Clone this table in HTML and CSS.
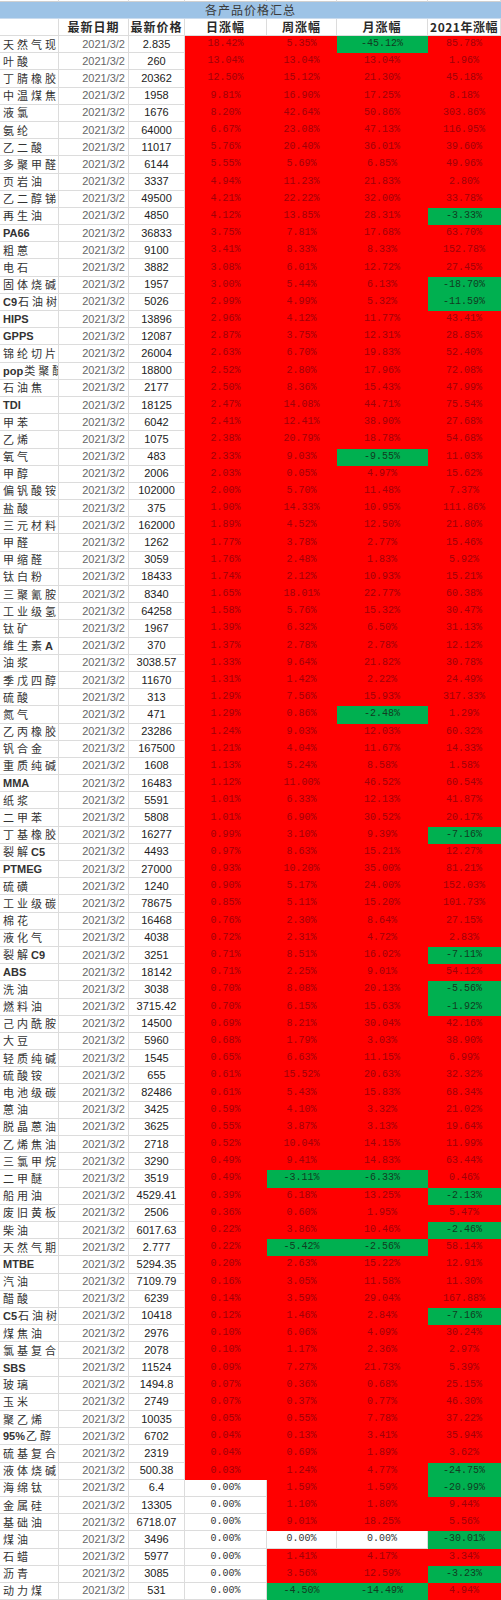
FILE: index.html
```html
<!DOCTYPE html>
<html lang="zh-CN">
<head>
<meta charset="utf-8">
<title>各产品价格汇总</title>
<link rel="stylesheet" href="styles.css">
</head>
<body>
<table class="sheet">
<colgroup><col class="c1"><col class="c2"><col class="c3"><col class="c4"><col class="c5"><col class="c6"><col class="c7"></colgroup>
<tbody>
<tr class="stub"><td></td><td></td><td></td><td></td><td></td><td></td><td></td></tr>
<tr class="title"><td colspan="7">各产品价格汇总</td></tr>
<tr class="head"><td></td><td>最新日期</td><td>最新价格</td><td>日涨幅</td><td>周涨幅</td><td>月涨幅</td><td>2021年涨幅</td></tr>
<tr><td class="n">天然气现货</td><td class="d">2021/3/2</td><td class="p">2.835</td><td class="r">18.42%</td><td class="r">5.35%</td><td class="g">-45.12%</td><td class="r">85.78%</td></tr>
<tr><td class="n">叶酸</td><td class="d">2021/3/2</td><td class="p">260</td><td class="r">13.04%</td><td class="r">13.04%</td><td class="r">13.04%</td><td class="r">1.96%</td></tr>
<tr><td class="n">丁腈橡胶</td><td class="d">2021/3/2</td><td class="p">20362</td><td class="r">12.50%</td><td class="r">15.12%</td><td class="r">21.30%</td><td class="r">45.18%</td></tr>
<tr><td class="n">中温煤焦油</td><td class="d">2021/3/2</td><td class="p">1958</td><td class="r">9.81%</td><td class="r">16.90%</td><td class="r">17.25%</td><td class="r">8.18%</td></tr>
<tr><td class="n">液氯</td><td class="d">2021/3/2</td><td class="p">1676</td><td class="r">8.20%</td><td class="r">42.64%</td><td class="r">50.86%</td><td class="r">303.86%</td></tr>
<tr><td class="n">氨纶</td><td class="d">2021/3/2</td><td class="p">64000</td><td class="r">6.67%</td><td class="r">23.08%</td><td class="r">47.13%</td><td class="r">116.95%</td></tr>
<tr><td class="n">乙二酸</td><td class="d">2021/3/2</td><td class="p">11017</td><td class="r">5.76%</td><td class="r">20.40%</td><td class="r">36.01%</td><td class="r">39.60%</td></tr>
<tr><td class="n">多聚甲醛</td><td class="d">2021/3/2</td><td class="p">6144</td><td class="r">5.55%</td><td class="r">5.69%</td><td class="r">6.85%</td><td class="r">49.96%</td></tr>
<tr><td class="n">页岩油</td><td class="d">2021/3/2</td><td class="p">3337</td><td class="r">4.94%</td><td class="r">11.23%</td><td class="r">21.83%</td><td class="r">2.80%</td></tr>
<tr><td class="n">乙二醇锑</td><td class="d">2021/3/2</td><td class="p">49500</td><td class="r">4.21%</td><td class="r">22.22%</td><td class="r">32.00%</td><td class="r">33.78%</td></tr>
<tr><td class="n">再生油</td><td class="d">2021/3/2</td><td class="p">4850</td><td class="r">4.12%</td><td class="r">13.85%</td><td class="r">28.31%</td><td class="g">-3.33%</td></tr>
<tr><td class="n"><span class="l">PA66</span></td><td class="d">2021/3/2</td><td class="p">36833</td><td class="r">3.75%</td><td class="r">7.81%</td><td class="r">17.68%</td><td class="r">63.70%</td></tr>
<tr><td class="n">粗蒽</td><td class="d">2021/3/2</td><td class="p">9100</td><td class="r">3.41%</td><td class="r">8.33%</td><td class="r">8.33%</td><td class="r">152.78%</td></tr>
<tr><td class="n">电石</td><td class="d">2021/3/2</td><td class="p">3882</td><td class="r">3.08%</td><td class="r">6.01%</td><td class="r">12.72%</td><td class="r">27.45%</td></tr>
<tr><td class="n">固体烧碱</td><td class="d">2021/3/2</td><td class="p">1957</td><td class="r">3.00%</td><td class="r">5.44%</td><td class="r">6.13%</td><td class="g">-18.70%</td></tr>
<tr><td class="n"><span class="l">C9</span>石油树脂</td><td class="d">2021/3/2</td><td class="p">5026</td><td class="r">2.99%</td><td class="r">4.99%</td><td class="r">5.32%</td><td class="g">-11.59%</td></tr>
<tr><td class="n"><span class="l">HIPS</span></td><td class="d">2021/3/2</td><td class="p">13896</td><td class="r">2.96%</td><td class="r">4.12%</td><td class="r">11.77%</td><td class="r">43.41%</td></tr>
<tr><td class="n"><span class="l">GPPS</span></td><td class="d">2021/3/2</td><td class="p">12087</td><td class="r">2.87%</td><td class="r">3.75%</td><td class="r">12.31%</td><td class="r">28.85%</td></tr>
<tr><td class="n">锦纶切片</td><td class="d">2021/3/2</td><td class="p">26004</td><td class="r">2.63%</td><td class="r">6.70%</td><td class="r">19.83%</td><td class="r">52.40%</td></tr>
<tr><td class="n"><span class="l">pop</span>类聚醚</td><td class="d">2021/3/2</td><td class="p">18800</td><td class="r">2.52%</td><td class="r">2.80%</td><td class="r">17.96%</td><td class="r">72.08%</td></tr>
<tr><td class="n">石油焦</td><td class="d">2021/3/2</td><td class="p">2177</td><td class="r">2.50%</td><td class="r">8.36%</td><td class="r">15.43%</td><td class="r">47.99%</td></tr>
<tr><td class="n"><span class="l">TDI</span></td><td class="d">2021/3/2</td><td class="p">18125</td><td class="r">2.47%</td><td class="r">14.08%</td><td class="r">44.71%</td><td class="r">75.54%</td></tr>
<tr><td class="n">甲苯</td><td class="d">2021/3/2</td><td class="p">6042</td><td class="r">2.41%</td><td class="r">12.41%</td><td class="r">38.90%</td><td class="r">27.68%</td></tr>
<tr><td class="n">乙烯</td><td class="d">2021/3/2</td><td class="p">1075</td><td class="r">2.38%</td><td class="r">20.79%</td><td class="r">18.78%</td><td class="r">54.68%</td></tr>
<tr><td class="n">氧气</td><td class="d">2021/3/2</td><td class="p">483</td><td class="r">2.33%</td><td class="r">9.03%</td><td class="g">-9.55%</td><td class="r">11.03%</td></tr>
<tr><td class="n">甲醇</td><td class="d">2021/3/2</td><td class="p">2006</td><td class="r">2.03%</td><td class="r">0.05%</td><td class="r">4.97%</td><td class="r">15.62%</td></tr>
<tr><td class="n">偏钒酸铵</td><td class="d">2021/3/2</td><td class="p">102000</td><td class="r">2.00%</td><td class="r">5.70%</td><td class="r">11.48%</td><td class="r">7.37%</td></tr>
<tr><td class="n">盐酸</td><td class="d">2021/3/2</td><td class="p">375</td><td class="r">1.90%</td><td class="r">14.33%</td><td class="r">10.95%</td><td class="r">111.86%</td></tr>
<tr><td class="n">三元材料</td><td class="d">2021/3/2</td><td class="p">162000</td><td class="r">1.89%</td><td class="r">4.52%</td><td class="r">12.50%</td><td class="r">21.80%</td></tr>
<tr><td class="n">甲醛</td><td class="d">2021/3/2</td><td class="p">1262</td><td class="r">1.77%</td><td class="r">3.78%</td><td class="r">2.77%</td><td class="r">15.46%</td></tr>
<tr><td class="n">甲缩醛</td><td class="d">2021/3/2</td><td class="p">3059</td><td class="r">1.76%</td><td class="r">2.48%</td><td class="r">1.83%</td><td class="r">5.92%</td></tr>
<tr><td class="n">钛白粉</td><td class="d">2021/3/2</td><td class="p">18433</td><td class="r">1.74%</td><td class="r">2.12%</td><td class="r">10.93%</td><td class="r">15.21%</td></tr>
<tr><td class="n">三聚氰胺</td><td class="d">2021/3/2</td><td class="p">8340</td><td class="r">1.65%</td><td class="r">18.01%</td><td class="r">22.77%</td><td class="r">60.38%</td></tr>
<tr><td class="n">工业级氢氧化锂</td><td class="d">2021/3/2</td><td class="p">64258</td><td class="r">1.58%</td><td class="r">5.76%</td><td class="r">15.32%</td><td class="r">30.47%</td></tr>
<tr><td class="n">钛矿</td><td class="d">2021/3/2</td><td class="p">1967</td><td class="r">1.39%</td><td class="r">6.32%</td><td class="r">6.50%</td><td class="r">31.13%</td></tr>
<tr><td class="n">维生素<span class="l">A</span></td><td class="d">2021/3/2</td><td class="p">370</td><td class="r">1.37%</td><td class="r">2.78%</td><td class="r">2.78%</td><td class="r">12.12%</td></tr>
<tr><td class="n">油浆</td><td class="d">2021/3/2</td><td class="p">3038.57</td><td class="r">1.33%</td><td class="r">9.64%</td><td class="r">21.82%</td><td class="r">30.78%</td></tr>
<tr><td class="n">季戊四醇</td><td class="d">2021/3/2</td><td class="p">11670</td><td class="r">1.31%</td><td class="r">1.42%</td><td class="r">2.22%</td><td class="r">24.49%</td></tr>
<tr><td class="n">硫酸</td><td class="d">2021/3/2</td><td class="p">313</td><td class="r">1.29%</td><td class="r">7.56%</td><td class="r">15.93%</td><td class="r">317.33%</td></tr>
<tr><td class="n">氮气</td><td class="d">2021/3/2</td><td class="p">471</td><td class="r">1.29%</td><td class="r">0.86%</td><td class="g">-2.48%</td><td class="r">1.29%</td></tr>
<tr><td class="n">乙丙橡胶</td><td class="d">2021/3/2</td><td class="p">23286</td><td class="r">1.24%</td><td class="r">9.03%</td><td class="r">12.03%</td><td class="r">60.32%</td></tr>
<tr><td class="n">钒合金</td><td class="d">2021/3/2</td><td class="p">167500</td><td class="r">1.21%</td><td class="r">4.04%</td><td class="r">11.67%</td><td class="r">14.33%</td></tr>
<tr><td class="n">重质纯碱</td><td class="d">2021/3/2</td><td class="p">1608</td><td class="r">1.13%</td><td class="r">5.24%</td><td class="r">8.58%</td><td class="r">1.58%</td></tr>
<tr><td class="n"><span class="l">MMA</span></td><td class="d">2021/3/2</td><td class="p">16483</td><td class="r">1.12%</td><td class="r">11.00%</td><td class="r">46.52%</td><td class="r">60.54%</td></tr>
<tr><td class="n">纸浆</td><td class="d">2021/3/2</td><td class="p">5591</td><td class="r">1.01%</td><td class="r">6.33%</td><td class="r">12.13%</td><td class="r">41.87%</td></tr>
<tr><td class="n">二甲苯</td><td class="d">2021/3/2</td><td class="p">5808</td><td class="r">1.01%</td><td class="r">6.90%</td><td class="r">30.52%</td><td class="r">20.17%</td></tr>
<tr><td class="n">丁基橡胶</td><td class="d">2021/3/2</td><td class="p">16277</td><td class="r">0.99%</td><td class="r">3.10%</td><td class="r">9.39%</td><td class="g">-7.16%</td></tr>
<tr><td class="n">裂解<span class="l">C5</span></td><td class="d">2021/3/2</td><td class="p">4493</td><td class="r">0.97%</td><td class="r">8.63%</td><td class="r">15.21%</td><td class="r">12.27%</td></tr>
<tr><td class="n"><span class="l">PTMEG</span></td><td class="d">2021/3/2</td><td class="p">27000</td><td class="r">0.93%</td><td class="r">10.20%</td><td class="r">35.00%</td><td class="r">81.21%</td></tr>
<tr><td class="n">硫磺</td><td class="d">2021/3/2</td><td class="p">1240</td><td class="r">0.90%</td><td class="r">5.17%</td><td class="r">24.00%</td><td class="r">152.03%</td></tr>
<tr><td class="n">工业级碳酸锂</td><td class="d">2021/3/2</td><td class="p">78675</td><td class="r">0.85%</td><td class="r">5.11%</td><td class="r">15.20%</td><td class="r">101.73%</td></tr>
<tr><td class="n">棉花</td><td class="d">2021/3/2</td><td class="p">16468</td><td class="r">0.76%</td><td class="r">2.30%</td><td class="r">8.64%</td><td class="r">27.15%</td></tr>
<tr><td class="n">液化气</td><td class="d">2021/3/2</td><td class="p">4038</td><td class="r">0.72%</td><td class="r">2.31%</td><td class="r">4.72%</td><td class="r">2.83%</td></tr>
<tr><td class="n">裂解<span class="l">C9</span></td><td class="d">2021/3/2</td><td class="p">3251</td><td class="r">0.71%</td><td class="r">8.51%</td><td class="r">16.02%</td><td class="g">-7.11%</td></tr>
<tr><td class="n"><span class="l">ABS</span></td><td class="d">2021/3/2</td><td class="p">18142</td><td class="r">0.71%</td><td class="r">2.25%</td><td class="r">9.01%</td><td class="r">54.12%</td></tr>
<tr><td class="n">洗油</td><td class="d">2021/3/2</td><td class="p">3038</td><td class="r">0.70%</td><td class="r">8.08%</td><td class="r">20.13%</td><td class="g">-5.56%</td></tr>
<tr><td class="n">燃料油</td><td class="d">2021/3/2</td><td class="p">3715.42</td><td class="r">0.70%</td><td class="r">6.15%</td><td class="r">15.63%</td><td class="g">-1.92%</td></tr>
<tr><td class="n">己内酰胺</td><td class="d">2021/3/2</td><td class="p">14500</td><td class="r">0.69%</td><td class="r">8.21%</td><td class="r">30.04%</td><td class="r">42.16%</td></tr>
<tr><td class="n">大豆</td><td class="d">2021/3/2</td><td class="p">5960</td><td class="r">0.68%</td><td class="r">1.79%</td><td class="r">3.03%</td><td class="r">38.90%</td></tr>
<tr><td class="n">轻质纯碱</td><td class="d">2021/3/2</td><td class="p">1545</td><td class="r">0.65%</td><td class="r">6.63%</td><td class="r">11.15%</td><td class="r">6.99%</td></tr>
<tr><td class="n">硫酸铵</td><td class="d">2021/3/2</td><td class="p">655</td><td class="r">0.61%</td><td class="r">15.52%</td><td class="r">20.63%</td><td class="r">32.32%</td></tr>
<tr><td class="n">电池级碳酸锂</td><td class="d">2021/3/2</td><td class="p">82486</td><td class="r">0.61%</td><td class="r">5.43%</td><td class="r">15.83%</td><td class="r">68.34%</td></tr>
<tr><td class="n">蒽油</td><td class="d">2021/3/2</td><td class="p">3425</td><td class="r">0.59%</td><td class="r">4.10%</td><td class="r">3.32%</td><td class="r">21.02%</td></tr>
<tr><td class="n">脱晶蒽油</td><td class="d">2021/3/2</td><td class="p">3625</td><td class="r">0.55%</td><td class="r">3.87%</td><td class="r">3.13%</td><td class="r">19.64%</td></tr>
<tr><td class="n">乙烯焦油</td><td class="d">2021/3/2</td><td class="p">2718</td><td class="r">0.52%</td><td class="r">10.04%</td><td class="r">14.15%</td><td class="r">11.99%</td></tr>
<tr><td class="n">三氯甲烷</td><td class="d">2021/3/2</td><td class="p">3290</td><td class="r">0.49%</td><td class="r">9.41%</td><td class="r">14.83%</td><td class="r">63.44%</td></tr>
<tr><td class="n">二甲醚</td><td class="d">2021/3/2</td><td class="p">3519</td><td class="r">0.49%</td><td class="g">-3.11%</td><td class="g">-6.33%</td><td class="r">0.46%</td></tr>
<tr><td class="n">船用油</td><td class="d">2021/3/2</td><td class="p">4529.41</td><td class="r">0.39%</td><td class="r">6.18%</td><td class="r">13.25%</td><td class="g">-2.13%</td></tr>
<tr><td class="n">废旧黄板纸</td><td class="d">2021/3/2</td><td class="p">2506</td><td class="r">0.36%</td><td class="r">0.60%</td><td class="r">1.95%</td><td class="r">5.47%</td></tr>
<tr><td class="n">柴油</td><td class="d">2021/3/2</td><td class="p">6017.63</td><td class="r">0.22%</td><td class="r">3.86%</td><td class="r">10.46%</td><td class="g">-2.46%</td></tr>
<tr><td class="n">天然气期货</td><td class="d">2021/3/2</td><td class="p">2.777</td><td class="r">0.22%</td><td class="g">-5.42%</td><td class="g">-2.56%</td><td class="r">58.14%</td></tr>
<tr><td class="n"><span class="l">MTBE</span></td><td class="d">2021/3/2</td><td class="p">5294.35</td><td class="r">0.20%</td><td class="r">2.63%</td><td class="r">15.22%</td><td class="r">12.91%</td></tr>
<tr><td class="n">汽油</td><td class="d">2021/3/2</td><td class="p">7109.79</td><td class="r">0.16%</td><td class="r">3.05%</td><td class="r">11.58%</td><td class="r">11.30%</td></tr>
<tr><td class="n">醋酸</td><td class="d">2021/3/2</td><td class="p">6239</td><td class="r">0.14%</td><td class="r">3.59%</td><td class="r">29.04%</td><td class="r">167.88%</td></tr>
<tr><td class="n"><span class="l">C5</span>石油树脂</td><td class="d">2021/3/2</td><td class="p">10418</td><td class="r">0.12%</td><td class="r">1.46%</td><td class="r">2.84%</td><td class="g">-7.16%</td></tr>
<tr><td class="n">煤焦油</td><td class="d">2021/3/2</td><td class="p">2976</td><td class="r">0.10%</td><td class="r">6.06%</td><td class="r">4.09%</td><td class="r">30.24%</td></tr>
<tr><td class="n">氯基复合肥</td><td class="d">2021/3/2</td><td class="p">2078</td><td class="r">0.10%</td><td class="r">1.17%</td><td class="r">2.36%</td><td class="r">2.97%</td></tr>
<tr><td class="n"><span class="l">SBS</span></td><td class="d">2021/3/2</td><td class="p">11524</td><td class="r">0.09%</td><td class="r">7.27%</td><td class="r">21.73%</td><td class="r">5.39%</td></tr>
<tr><td class="n">玻璃</td><td class="d">2021/3/2</td><td class="p">1494.8</td><td class="r">0.07%</td><td class="r">0.36%</td><td class="r">0.68%</td><td class="r">25.15%</td></tr>
<tr><td class="n">玉米</td><td class="d">2021/3/2</td><td class="p">2749</td><td class="r">0.07%</td><td class="r">0.37%</td><td class="r">0.77%</td><td class="r">46.30%</td></tr>
<tr><td class="n">聚乙烯</td><td class="d">2021/3/2</td><td class="p">10035</td><td class="r">0.05%</td><td class="r">0.55%</td><td class="r">7.78%</td><td class="r">37.22%</td></tr>
<tr><td class="n"><span class="l">95%</span>乙醇</td><td class="d">2021/3/2</td><td class="p">6702</td><td class="r">0.04%</td><td class="r">0.13%</td><td class="r">3.41%</td><td class="r">35.94%</td></tr>
<tr><td class="n">硫基复合肥</td><td class="d">2021/3/2</td><td class="p">2319</td><td class="r">0.04%</td><td class="r">0.69%</td><td class="r">1.89%</td><td class="r">3.62%</td></tr>
<tr><td class="n">液体烧碱</td><td class="d">2021/3/2</td><td class="p">500.38</td><td class="r">0.03%</td><td class="r">1.24%</td><td class="r">4.77%</td><td class="g">-24.75%</td></tr>
<tr><td class="n">海绵钛</td><td class="d">2021/3/2</td><td class="p">6.4</td><td class="w">0.00%</td><td class="r">1.59%</td><td class="r">1.59%</td><td class="g">-20.99%</td></tr>
<tr><td class="n">金属硅</td><td class="d">2021/3/2</td><td class="p">13305</td><td class="w">0.00%</td><td class="r">1.10%</td><td class="r">1.80%</td><td class="r">9.44%</td></tr>
<tr><td class="n">基础油</td><td class="d">2021/3/2</td><td class="p">6718.07</td><td class="w">0.00%</td><td class="r">9.01%</td><td class="r">18.25%</td><td class="r">5.56%</td></tr>
<tr><td class="n">煤油</td><td class="d">2021/3/2</td><td class="p">3496</td><td class="w">0.00%</td><td class="w">0.00%</td><td class="w">0.00%</td><td class="g">-30.01%</td></tr>
<tr><td class="n">石蜡</td><td class="d">2021/3/2</td><td class="p">5977</td><td class="w">0.00%</td><td class="r">1.41%</td><td class="r">4.17%</td><td class="r">3.34%</td></tr>
<tr><td class="n">沥青</td><td class="d">2021/3/2</td><td class="p">3085</td><td class="w">0.00%</td><td class="r">3.56%</td><td class="r">12.59%</td><td class="g">-3.23%</td></tr>
<tr><td class="n">动力煤</td><td class="d">2021/3/2</td><td class="p">531</td><td class="w">0.00%</td><td class="g">-4.50%</td><td class="g">-14.49%</td><td class="r">4.94%</td></tr>
</tbody>
</table>
</body>
</html>
```
FILE: styles.css
```css
html, body {
  margin: 0;
  padding: 0;
  background: #ffffff;
}

.sheet {
  width: 501px;
  table-layout: fixed;
  border-collapse: separate;
  border-spacing: 0;
  font-family: "Liberation Sans", "Noto Sans CJK SC", sans-serif;
  font-size: 11px;
  line-height: 1;
}

.c1 { width: 59px; }
.c2 { width: 70px; }
.c3 { width: 56px; }
.c4 { width: 82px; }
.c5 { width: 70px; }
.c6 { width: 91px; }
.c7 { width: 73px; }

.sheet td {
  height: 17.19px;
  padding: 0;
  box-sizing: border-box;
  border-right: 1px solid #dcdcdc;
  border-bottom: 1px solid #dcdcdc;
  white-space: nowrap;
  overflow: hidden;
  vertical-align: middle;
  color: #222222;
}

.sheet .stub td {
  height: 2px;
  border-bottom: 1px solid #d0d0d0;
}

.sheet .title td {
  height: 17px;
  background: #9dc3e6;
  text-align: center;
  font-family: "Noto Sans CJK SC", sans-serif;
  font-size: 12px;
  letter-spacing: 1px;
  color: #3a3a3a;
  border-right: none;
  border-bottom: 1px solid #c9dbee;
}

.sheet .head td {
  height: 17px;
  text-align: center;
  font-family: "Noto Sans CJK SC", sans-serif;
  font-weight: 700;
  font-size: 12px;
  letter-spacing: 1px;
  color: #2a2a2a;
}

.sheet .head td:last-child {
  letter-spacing: 0.5px;
}

.sheet td.n {
  padding-left: 3px;
  text-overflow: clip;
  font-family: "Noto Sans CJK SC", sans-serif;
  font-size: 11px;
  letter-spacing: 3px;
  color: #333333;
}

.n .l {
  font-family: "Liberation Sans", sans-serif;
  font-weight: 700;
  letter-spacing: 0;
  margin-right: 1px;
}

.sheet td.d {
  text-align: right;
  padding-right: 3px;
  color: #666666;
  font-size: 11px;
}

.sheet td.p {
  text-align: center;
  color: #222222;
  font-size: 11px;
}

.sheet td.r,
.sheet td.g,
.sheet td.w {
  text-align: center;
  font-family: "Liberation Mono", monospace;
  font-size: 10px;
}

.sheet td.r {
  background: #ff0000;
  border-color: #ff0000;
  color: #a00008;
}

.sheet td.g {
  background: #00b050;
  border-color: #00b050;
  color: #113c22;
}

.sheet td.w {
  background: #ffffff;
  color: #333333;
}
```
